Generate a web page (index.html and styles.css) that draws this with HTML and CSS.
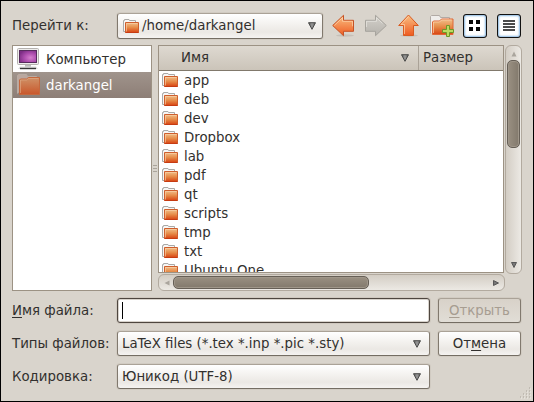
FILE: index.html
```html
<!DOCTYPE html>
<html lang="ru">
<head>
<meta charset="utf-8">
<title>LaTeX files</title>
<link rel="stylesheet" href="styles.css">
</head>
<body>
<svg class="defs" width="0" height="0">
  <defs>
    <linearGradient id="orange" x1="0" y1="0" x2="0" y2="1"><stop offset="0" stop-color="#f1c18c"/><stop offset=".5" stop-color="#e68c49"/><stop offset="1" stop-color="#d94412"/></linearGradient>
    <linearGradient id="muted" x1="0" y1="0" x2="0" y2="1"><stop offset="0" stop-color="#cf9268"/><stop offset="1" stop-color="#c9562a"/></linearGradient>
    <linearGradient id="arrow" x1="0" y1="0" x2="0" y2="1"><stop offset="0" stop-color="#fac184"/><stop offset="1" stop-color="#ee5a20"/></linearGradient>
    <linearGradient id="grey" x1="0" y1="0" x2="0" y2="1"><stop offset="0" stop-color="#d3d0ca"/><stop offset="1" stop-color="#b5b2ac"/></linearGradient>
    <linearGradient id="tri" x1="0" y1="0" x2="1" y2="0"><stop offset="0" stop-color="#555"/><stop offset=".5" stop-color="#999"/><stop offset="1" stop-color="#555"/></linearGradient>
    <radialGradient id="screen" cx=".65" cy=".6" r=".7"><stop offset="0" stop-color="#d580cd"/><stop offset=".5" stop-color="#b050b0"/><stop offset="1" stop-color="#7d2d85"/></radialGradient>
    <symbol id="folder" viewBox="0 0 16 16">
      <path d="M2.500 13.500h-2v-11h1v-1h4.500l.5 1h6v3" fill="#f6f6f5" stroke="#aaa9a7"/>
      <path d="M2.500 14.500V4.500h13v10z" fill="url(#orange)" stroke="#cf5f2d"/>
      <path d="M3.500 13.500V5.500h11" fill="none" stroke="#f8d4ad" stroke-opacity=".6"/>
      <path d="M2.500 14.500h13" stroke="#c63b12"/>
    </symbol>
    <symbol id="down" viewBox="0 0 8 8"><path d="M.5.7h7L4 7.3z" fill="url(#tri)" stroke="#4a4a49"/></symbol>
  </defs>
</svg>
<main class="dialog">
  <header class="toolbar">
    <span class="label">Перейти к:</span>
    <div class="combo path"><svg class="folder"><use href="#folder"/></svg><span>/home/darkangel</span><svg class="down"><use href="#down"/></svg></div>
    <nav class="tools">
      <svg class="tool" viewBox="0 0 24 24"><ellipse cx="13" cy="21.500" rx="9" ry="1.200" fill="#8c857a" opacity=".25"/><path d="M.7 11.500 11.500 1.300v5h10v11h-10v4.400z" fill="url(#arrow)" stroke="#c65225"/><path d="M2.300 11.500 10.500 3.600v3.700h10v5" fill="none" stroke="#ffe0bc" stroke-opacity=".6"/></svg>
      <svg class="tool" viewBox="0 0 24 24"><path d="M22.300 11.500 11.500 1.300v5h-10v11h10v4.400z" fill="url(#grey)" stroke="#a6a39d"/><path d="M2.500 13V7.300h10V3.700l6 5.700" fill="none" stroke="#eeece8" stroke-opacity=".6"/></svg>
      <svg class="tool up" viewBox="0 0 24 24"><ellipse cx="12" cy="21.500" rx="9" ry="1.200" fill="#8c857a" opacity=".25"/><path d="M11.500 1 21.300 11.500h-4.800v10h-10v-10H1.700z" fill="url(#arrow)" stroke="#d95b20"/><path d="M7.500 20V10.500H4l7.500-8" fill="none" stroke="#ffe3bf" stroke-opacity=".6"/></svg>
      <svg class="tool new" viewBox="0 0 24 24"><path d="M.5 19.500v-17l1-1h8l1 2h9v4" fill="#efedeb" stroke="#b1aaa5"/><path d="M2.500 20.500V8l1-1h6l2-2h11.500v15.500z" fill="url(#orange)" stroke="#df6737"/><path d="M3.500 19V8h6l2-2h10" fill="none" stroke="#ffd5b3" stroke-opacity=".65"/><path d="M16.500 11.500h3v4h4v3h-4v4h-3v-4h-4v-3h4z" fill="#bbda61" stroke="#6d9827"/></svg>
      <svg class="view grid" viewBox="0 0 22 22"><path d="M5 5h4v4H5zM12 5h4v4h-4zM5 12h4v4H5zM12 12h4v4h-4z" fill="#050505"/></svg>
      <svg class="view list" viewBox="0 0 22 22"><path d="M5 6h12M5 9h12M5 12h12M5 15h12" stroke="#111" stroke-width="1.700"/></svg>
    </nav>
  </header>
  <section class="browser">
    <aside class="places">
      <div class="place"><svg viewBox="0 0 24 24"><rect x=".5" y="1.500" width="21" height="16" rx="1" fill="#edeceb" stroke="#b5b2af"/><rect x="2.500" y="3.500" width="17" height="12" fill="url(#screen)" stroke="#572b5d"/><path d="M8 18h6v2H8z" fill="#bbb"/><path d="M3 19.500h16l2 2.500H1z" fill="#ddd"/><path d="M3 21.500h16" stroke="#383838" stroke-width="1.400"/></svg><span>Компьютер</span></div>
      <div class="place selected"><svg viewBox="0 0 24 24"><path d="M.5 20.500v-18l1-1h8l1 2h9v4" fill="#bba89f" stroke="#b9aca3"/><path d="M2.500 21.500V7l1-1h6l2-1.500h11v17z" fill="url(#muted)" stroke="#c4683e"/><path d="M3.500 20V7h6l2-1.500h10" fill="none" stroke="#dfae8b" stroke-opacity=".6"/></svg><span>darkangel</span></div>
    </aside>
    <div class="splitter"><i></i><i></i><i></i></div>
    <div class="files">
      <div class="tree">
        <div class="columns"><div class="name">Имя<svg class="down"><use href="#down"/></svg></div><div class="size">Размер</div></div>
        <div class="rows">
          <div class="row"><svg class="folder"><use href="#folder"/></svg>app</div>
          <div class="row"><svg class="folder"><use href="#folder"/></svg>deb</div>
          <div class="row"><svg class="folder"><use href="#folder"/></svg>dev</div>
          <div class="row"><svg class="folder"><use href="#folder"/></svg>Dropbox</div>
          <div class="row"><svg class="folder"><use href="#folder"/></svg>lab</div>
          <div class="row"><svg class="folder"><use href="#folder"/></svg>pdf</div>
          <div class="row"><svg class="folder"><use href="#folder"/></svg>qt</div>
          <div class="row"><svg class="folder"><use href="#folder"/></svg>scripts</div>
          <div class="row"><svg class="folder"><use href="#folder"/></svg>tmp</div>
          <div class="row"><svg class="folder"><use href="#folder"/></svg>txt</div>
          <div class="row"><svg class="folder"><use href="#folder"/></svg>Ubuntu One</div>
        </div>
      </div>
      <div class="scroll vertical"><svg class="tip" viewBox="0 0 6 6"><path d="M.5 5.500h5L3 .5z" fill="#aaa59d"/></svg><div class="thumb"></div><svg class="tip end" viewBox="0 0 6 6"><path d="M.5.500h5L3 5.500z" fill="#777" stroke="#444" stroke-width=".8"/></svg></div>
      <div class="scroll horizontal"><svg class="tip" viewBox="0 0 6 6"><path d="M5.500.500v5L.5 3z" fill="#aaa59d"/></svg><div class="thumb"></div><svg class="tip end" viewBox="0 0 6 6"><path d="M.5.500v5L5.500 3z" fill="#777" stroke="#444" stroke-width=".8"/></svg></div>
    </div>
  </section>
  <footer class="form">
    <span class="label"><u>И</u>мя файла:</span><div class="entry"><i class="caret"></i></div><div class="button disabled"><span><u>О</u>ткрыть</span></div>
    <span class="label">Типы файлов:</span><div class="combo"><span>LaTeX files (*.tex *.inp *.pic *.sty)</span><svg class="down"><use href="#down"/></svg></div><div class="button"><span>От<u>м</u>ена</span></div>
    <span class="label">Кодировка:</span><div class="combo"><span>Юникод (UTF-8)</span><svg class="down"><use href="#down"/></svg></div>
  </footer>
  <svg class="grip" viewBox="0 0 12 12"><path d="M10 1h1M7 4h1M10 4h1M4 7h1M7 7h1M10 7h1M1 10h1M4 10h1M7 10h1M10 10h1" stroke="#a8a299" stroke-width="1"/><path d="M11 2h1M8 5h1M11 5h1M5 8h1M8 8h1M11 8h1M2 11h1M5 11h1M8 11h1M11 11h1" stroke="#f1eee9"/></svg>
</main>
</body>
</html>
```
FILE: styles.css
```css
* { box-sizing: border-box; }
body { margin: 0; color: #32302e; font: 13.33px/19px "DejaVu Sans", sans-serif; }
svg { display: block; flex: none; }
span { white-space: nowrap; }
.defs { position: absolute; }
.dialog { position: relative; width: 534px; height: 402px; padding: 11px; border: 1px solid #000; background: #d9d4cc; overflow: hidden; }
.toolbar { display: flex; align-items: center; height: 27px; }
.toolbar .label { width: 105px; }
.label { align-self: center; }
.combo { display: flex; align-items: center; height: 26px; padding: 0 8px 0 4px; border: 1px solid; border-color: #aaa297 #81796e #746d63 #81796e; border-radius: 3px; background: linear-gradient(#fff, #f3f1ee 45%, #ebe8e4 75%, #f5f3f1); box-shadow: 0 0 0 1px #d1cbc2; }
.combo .down { margin-left: auto; }
.combo.path { width: 206px; padding-left: 5px; padding-right: 6px; }
.folder { width: 16px; height: 16px; }
.path span { margin-left: 3px; }
.down { width: 8px; height: 8px; }
.tools { display: flex; align-items: center; padding-left: 9px; }
.tool { width: 24px; height: 24px; margin-right: 8px; }
.tool.up { margin-left: 1px; }
.tool.new { margin-left: 1px; margin-right: 9px; }
.view { width: 24px; height: 24px; border: 1px solid #111; border-radius: 3px; background: #fff; box-shadow: inset 0 0 2px 1px #8bb9e2; outline: 1px solid rgba(20,20,20,.35); outline-offset: -1px; }
.view.list { margin-left: 10px; }
.browser { display: grid; grid-template-columns: 140px 6px 364px; height: 246px; margin-top: 6px; }
.places { border: 1px solid #9c9284; background: #fff; }
.place { display: flex; align-items: center; height: 26px; padding-left: 4px; gap: 5px; }
.place svg { width: 24px; height: 24px; }
.place.selected { color: #fff; background: linear-gradient(#a0948c, #8d7e76); }
.splitter { display: flex; flex-direction: column; align-items: center; justify-content: center; gap: 2px; }
.splitter i { width: 4px; height: 1px; background: #aaa49b; }
.files { display: grid; grid-template-columns: 347px 17px; grid-template-rows: 228px 18px; }
.tree { width: 346px; border: 1px solid #9c9284; background: #fff; overflow: hidden; }
.columns { display: flex; height: 25px; line-height: 24px; background: linear-gradient(#ded9d1, #cbc4b9); border-bottom: 1px solid #81796c; }
.name { display: flex; align-items: center; width: 260px; padding: 0 9px 0 22px; border-right: 1px solid #aaa297; }
.name .down { margin-left: auto; }
.size { padding-left: 4px; }
.row { display: flex; align-items: center; height: 19px; padding-left: 3px; gap: 6px; white-space: nowrap; }
.row .folder { margin-bottom: 1px; }
.scroll { display: flex; align-items: center; border: 1px solid #b2aa9f; border-radius: 6px; background: #e5e1db; }
.vertical { flex-direction: column; width: 17px; height: 229px; padding: 5px 0; background: linear-gradient(90deg, #d3cdc4, #ece9e4); }
.horizontal { height: 17px; margin-top: 1px; padding: 0 5px; background: linear-gradient(#d3cdc4, #ece9e4); }
.tip { width: 6px; height: 6px; }
.tip.end { margin-top: auto; }
.horizontal .end { margin: 0 0 0 auto; }
.thumb { border: 1px solid #665f56; border-radius: 5px; background: linear-gradient(90deg, #9a9082, #82796c); box-shadow: inset 0 0 0 1px #9f9689; }
.vertical .thumb { width: 13px; height: 88px; margin-top: 3px; }
.horizontal .thumb { width: 196px; height: 13px; margin-left: 3px; background: linear-gradient(#9a9082, #82796c); }
.form { display: grid; grid-template-columns: 105px 313px 91px; grid-template-rows: repeat(3, 25px); row-gap: 8px; margin-top: 7px; }
.form .combo, .form .entry, .form .button { height: 25px; }
.button { display: flex; align-items: center; justify-content: center; margin-left: 8px; width: 83px; height: 25px; border: 1px solid; border-color: #aaa297 #81796e #746d63; border-radius: 3px; background: linear-gradient(#fff, #f3f1ee 45%, #ebe8e4 75%, #f5f3f1); box-shadow: 0 0 0 1px #d1cbc2; }
.disabled { color: #a79d91; background: linear-gradient(#d8d2c9, #e1ddd6); }
.entry { padding: 3px 4px; border: 1px solid #4e463f; border-radius: 3px; background: #fff; box-shadow: inset 0 0 0 1px #d8d3cc, 0 0 0 1px #cfc8bf; }
.caret { display: block; width: 1px; height: 17px; background: #000; }
u { text-decoration: underline; text-decoration-thickness: 1px; text-underline-offset: 2px; }
.grip { position: absolute; right: 2px; bottom: 2px; width: 12px; height: 12px; }
```
